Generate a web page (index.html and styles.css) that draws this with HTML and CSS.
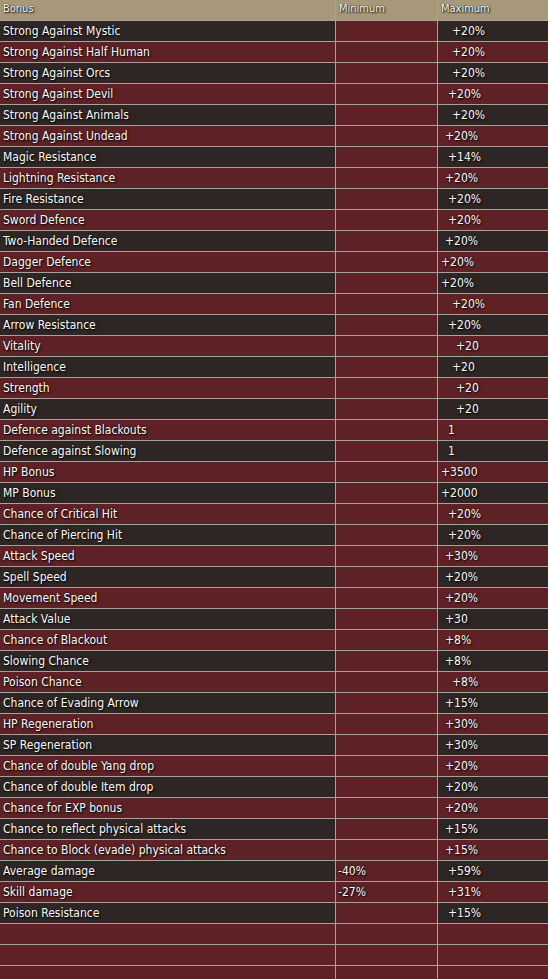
FILE: index.html
```html
<!DOCTYPE html>
<html>
<head>
<meta charset="utf-8">
<link rel="stylesheet" href="styles.css">
</head>
<body>
<table class="bonus-table">
<thead>
<tr><th class="c-name">Bonus</th><th class="c-min">Minimum</th><th class="c-max">Maximum</th></tr>
</thead>
<tbody>
<tr class="dark"><td>Strong Against Mystic</td><td class="min"></td><td class="max i3">+20%</td></tr>
<tr class="red"><td>Strong Against Half Human</td><td class="min"></td><td class="max i3">+20%</td></tr>
<tr class="dark"><td>Strong Against Orcs</td><td class="min"></td><td class="max i3">+20%</td></tr>
<tr class="red"><td>Strong Against Devil</td><td class="min"></td><td class="max i2">+20%</td></tr>
<tr class="dark"><td>Strong Against Animals</td><td class="min"></td><td class="max i3">+20%</td></tr>
<tr class="red"><td>Strong Against Undead</td><td class="min"></td><td class="max i1">+20%</td></tr>
<tr class="dark"><td>Magic Resistance</td><td class="min"></td><td class="max i2">+14%</td></tr>
<tr class="red"><td>Lightning Resistance</td><td class="min"></td><td class="max i1">+20%</td></tr>
<tr class="dark"><td>Fire Resistance</td><td class="min"></td><td class="max i2">+20%</td></tr>
<tr class="red"><td>Sword Defence</td><td class="min"></td><td class="max i2">+20%</td></tr>
<tr class="dark"><td>Two-Handed Defence</td><td class="min"></td><td class="max i1">+20%</td></tr>
<tr class="red"><td>Dagger Defence</td><td class="min"></td><td class="max i0">+20%</td></tr>
<tr class="dark"><td>Bell Defence</td><td class="min"></td><td class="max i0">+20%</td></tr>
<tr class="red"><td>Fan Defence</td><td class="min"></td><td class="max i3">+20%</td></tr>
<tr class="dark"><td>Arrow Resistance</td><td class="min"></td><td class="max i2">+20%</td></tr>
<tr class="red"><td>Vitality</td><td class="min"></td><td class="max i4">+20</td></tr>
<tr class="dark"><td>Intelligence</td><td class="min"></td><td class="max i3">+20</td></tr>
<tr class="red"><td>Strength</td><td class="min"></td><td class="max i4">+20</td></tr>
<tr class="dark"><td>Agility</td><td class="min"></td><td class="max i4">+20</td></tr>
<tr class="red"><td>Defence against Blackouts</td><td class="min"></td><td class="max i2">1</td></tr>
<tr class="dark"><td>Defence against Slowing</td><td class="min"></td><td class="max i2">1</td></tr>
<tr class="red"><td>HP Bonus</td><td class="min"></td><td class="max i0">+3500</td></tr>
<tr class="dark"><td>MP Bonus</td><td class="min"></td><td class="max i0">+2000</td></tr>
<tr class="red"><td>Chance of Critical Hit</td><td class="min"></td><td class="max i2">+20%</td></tr>
<tr class="dark"><td>Chance of Piercing Hit</td><td class="min"></td><td class="max i2">+20%</td></tr>
<tr class="red"><td>Attack Speed</td><td class="min"></td><td class="max i1">+30%</td></tr>
<tr class="dark"><td>Spell Speed</td><td class="min"></td><td class="max i1">+20%</td></tr>
<tr class="red"><td>Movement Speed</td><td class="min"></td><td class="max i1">+20%</td></tr>
<tr class="dark"><td>Attack Value</td><td class="min"></td><td class="max i1">+30</td></tr>
<tr class="red"><td>Chance of Blackout</td><td class="min"></td><td class="max i1">+8%</td></tr>
<tr class="dark"><td>Slowing Chance</td><td class="min"></td><td class="max i1">+8%</td></tr>
<tr class="red"><td>Poison Chance</td><td class="min"></td><td class="max i3">+8%</td></tr>
<tr class="dark"><td>Chance of Evading Arrow</td><td class="min"></td><td class="max i1">+15%</td></tr>
<tr class="red"><td>HP Regeneration</td><td class="min"></td><td class="max i1">+30%</td></tr>
<tr class="dark"><td>SP Regeneration</td><td class="min"></td><td class="max i1">+30%</td></tr>
<tr class="red"><td>Chance of double Yang drop</td><td class="min"></td><td class="max i1">+20%</td></tr>
<tr class="dark"><td>Chance of double Item drop</td><td class="min"></td><td class="max i1">+20%</td></tr>
<tr class="red"><td>Chance for EXP bonus</td><td class="min"></td><td class="max i1">+20%</td></tr>
<tr class="dark"><td>Chance to reflect physical attacks</td><td class="min"></td><td class="max i1">+15%</td></tr>
<tr class="red"><td>Chance to Block (evade) physical attacks</td><td class="min"></td><td class="max i1">+15%</td></tr>
<tr class="dark"><td>Average damage</td><td class="min">-40%</td><td class="max i2">+59%</td></tr>
<tr class="red"><td>Skill damage</td><td class="min">-27%</td><td class="max i2">+31%</td></tr>
<tr class="dark"><td>Poison Resistance</td><td class="min"></td><td class="max i2">+15%</td></tr>
<tr class="red"><td></td><td class="min"></td><td class="max"></td></tr>
<tr class="red"><td></td><td class="min"></td><td class="max"></td></tr>
<tr class="red"><td></td><td class="min"></td><td class="max"></td></tr>
</tbody>
</table>
</body>
</html>
```

FILE: styles.css
```css
html, body {
  margin: 0;
  padding: 0;
  background: #5e2226;
  overflow: hidden;
}

.bonus-table {
  border-collapse: collapse;
  width: 550px;
  table-layout: fixed;
  font-family: "DejaVu Sans Condensed", "DejaVu Sans", sans-serif;
  font-size: 12px;
  color: #ffffff;
  text-shadow: 1px 1px 2px #000000, 0 0 1px #000000;
}

.bonus-table th {
  background: #a8987a;
  height: 20px;
  padding: 0 0 0 3px;
  font-weight: normal;
  font-size: 11px;
  text-align: left;
  border-right: 1px solid #a8a09a;
  border-bottom: 1px solid #a8a09a;
  vertical-align: top;
  line-height: 18px;
}

.c-name { width: 332px; }
.c-min { width: 98px; }
.c-max { width: 110px; }

.bonus-table td {
  height: 20px;
  padding: 0 0 0 3px;
  border-right: 1px solid #a8a09a;
  border-bottom: 1px solid #a8a09a;
  line-height: 20px;
  white-space: nowrap;
  overflow: hidden;
}

.bonus-table tr.dark td { background: #2e2624; }
.bonus-table tr.red td { background: #5e2226; }
.bonus-table tr td.min { background: #5e2226; padding-left: 2px; }

.i0 { padding-left: 3px; }
.bonus-table td.i1 { padding-left: 7px; }
.bonus-table td.i2 { padding-left: 10px; }
.bonus-table td.i3 { padding-left: 14px; }
.bonus-table td.i4 { padding-left: 18px; }
```
